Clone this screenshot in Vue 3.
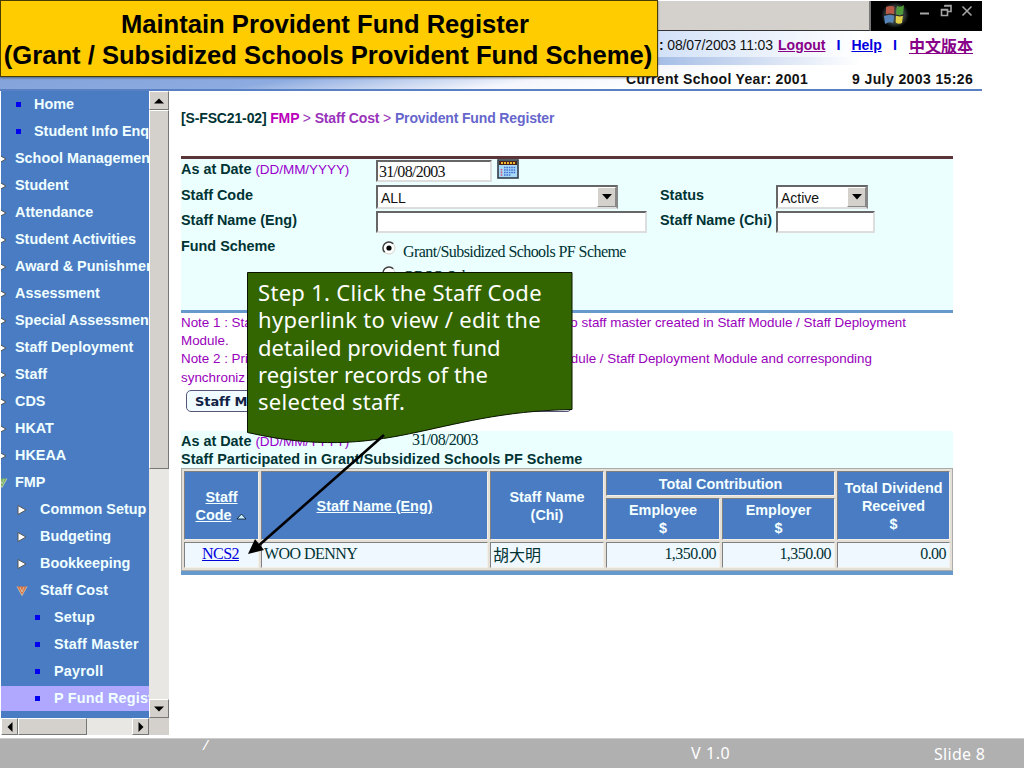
<script setup>
import { ref } from 'vue'

const menu = [
  { label: 'Home', level: 1, icon: 'dot' },
  { label: 'Student Info Enquiry', level: 1, icon: 'dot' },
  { label: 'School Management', level: 0, icon: 'closed' },
  { label: 'Student', level: 0, icon: 'closed' },
  { label: 'Attendance', level: 0, icon: 'closed' },
  { label: 'Student Activities', level: 0, icon: 'closed' },
  { label: 'Award & Punishment', level: 0, icon: 'closed' },
  { label: 'Assessment', level: 0, icon: 'closed' },
  { label: 'Special Assessment', level: 0, icon: 'closed' },
  { label: 'Staff Deployment', level: 0, icon: 'closed' },
  { label: 'Staff', level: 0, icon: 'closed' },
  { label: 'CDS', level: 0, icon: 'closed' },
  { label: 'HKAT', level: 0, icon: 'closed' },
  { label: 'HKEAA', level: 0, icon: 'closed' },
  { label: 'FMP', level: 0, icon: 'open' },
  { label: 'Common Setup', level: 2, icon: 'closed' },
  { label: 'Budgeting', level: 2, icon: 'closed' },
  { label: 'Bookkeeping', level: 2, icon: 'closed' },
  { label: 'Staff Cost', level: 2, icon: 'open' },
  { label: 'Setup', level: 3, icon: 'dot' },
  { label: 'Staff Master', level: 3, icon: 'dot' },
  { label: 'Payroll', level: 3, icon: 'dot' },
  { label: 'P Fund Register', level: 3, icon: 'dot' }
]

const current = ref('P Fund Register')

const rows = [
  { code: 'NCS2', eng: 'WOO DENNY', chi: '胡大明', employee: '1,350.00', employer: '1,350.00', dividend: '0.00' }
]
</script>

<template>
  <div class="slide">
    <header class="top">
      <div class="menubar">
        <div class="menubar-fill"></div>
        <div class="window-buttons">
          <svg class="flag" width="30" height="28" viewBox="0 0 30 28">
            <defs>
              <radialGradient id="glow"><stop offset=".4" stop-color="#5b6a6a" /><stop offset="1" stop-color="#000" /></radialGradient>
            </defs>
            <ellipse cx="15" cy="14" rx="14" ry="13" fill="url(#glow)" />
            <path d="M6 6q5-2 9 0l-1 8q-4-2-8 0z" fill="#b85a48" />
            <path d="M17 5q4 2 7-1l-1 9q-4 2-7 0z" fill="#4f9a38" />
            <path d="M4 15q5-2 10 0l-1 7q-4-2-8 1z" fill="#5784b8" />
            <path d="M16 14q3 2 7 0l-1 8q-4 2-7-1z" fill="#e0cf47" />
            <path d="M15 5v17M5 14q5-2 10 0t9 0" stroke="#222" fill="none" />
          </svg>
          <svg width="66" height="20" viewBox="0 0 66 20" fill="none" stroke="#a5a5a5" stroke-width="1.6">
            <path d="M10 12.500h9" stroke-width="2" />
            <path d="M34.500 4.500h6.500v6h-3M31.500 8.500h6v6h-6zM31 9h7M34 5h7" />
            <path d="M52.500 5.500l9 9M61.500 5.500l-9 9" />
          </svg>
        </div>
      </div>
      <div class="session">
        <span class="session-time"><b>:</b> 08/07/2003 11:03</span>
        <a class="visited logout">Logout</a>
        <b class="bar">I</b>
        <a class="help">Help</a>
        <b class="bar">I</b>
        <a class="visited chinese">中文版本</a>
      </div>
      <div class="year-line">
        <span class="year">Current School Year: 2001</span>
        <span class="today">9 July 2003 15:26</span>
      </div>
    </header>

    <div class="body">
      <aside class="sidebar">
        <div class="tree-row">
          <ul class="tree">
            <li v-for="item in menu" :key="item.label" :class="['level-' + item.level, { current: item.label === current }]"
                @click="current = item.label">
              <i v-if="item.icon === 'dot'" class="dot"></i>
              <svg v-else-if="item.icon === 'closed'" class="arrow" width="12" height="12" viewBox="0 0 12 12">
                <path d="M2 1.500l8 4.500-8 4.500z" fill="#fff" stroke="#555" stroke-width="1" />
              </svg>
              <svg v-else class="arrow" width="12" height="12" viewBox="0 0 12 12">
                <path d="M1 1.500h10L6 11z" :fill="item.level ? '#e07038' : '#76b45c'" />
                <path d="M1 1.500l5 9 5-9M4 2l2 5 2-5" fill="none" stroke="#c9cfc0" stroke-width=".8" />
              </svg>
              <span class="label">{{ item.label }}</span>
            </li>
          </ul>
          <div class="vscroll">
            <div class="sb-btn"><svg width="10" height="6"><path d="M0 5.500h10L5 .5z" /></svg></div>
            <div class="vthumb"></div>
            <div class="track"></div>
            <div class="sb-btn"><svg width="10" height="6"><path d="M0 .5h10L5 5.500z" /></svg></div>
          </div>
        </div>
        <div class="hscroll">
          <div class="hbtn"><svg width="6" height="10"><path d="M5.500 0v10L.5 5z" /></svg></div>
          <div class="hthumb"></div>
          <div class="track"></div>
          <div class="hbtn"><svg width="6" height="10"><path d="M.5 0v10l5-5z" /></svg></div>
          <div class="corner"></div>
        </div>
      </aside>

      <main class="content">
        <div class="crumbs">[S-FSC21-02] <span class="c1">FMP</span> <span class="c2"><i>&gt;</i> Staff Cost <i>&gt;</i></span> <span class="c3">Provident Fund Register</span></div>

        <section class="search">
          <div class="field-row">
            <label>As at Date <em>(DD/MM/YYYY)</em></label>
            <div class="box date">31/08/2003</div>
            <svg class="calendar" width="22" height="20" viewBox="0 0 22 20">
              <rect x="1" y="1" width="20" height="18" fill="#a8d8f8" stroke="#333c48" stroke-width="1.600" />
              <rect x="2" y="2" width="18" height="4" fill="#4b2518" />
              <path d="M4 4h14" stroke="#f0b830" stroke-width="2" stroke-dasharray="2 1" />
              <path d="M7 8.500h12M7 11h12M7 13.500h12M7 16h7" stroke="#3f6fd0" stroke-width="1.500" stroke-dasharray="1.600 .8" />
              <path d="M4.500 10v7" stroke="#d05070" stroke-width="1.500" stroke-dasharray="1.600 1" />
            </svg>
          </div>
          <div class="field-row">
            <label>Staff Code</label>
            <div class="box select code"><span>ALL</span><b><svg width="10" height="6"><path d="M0 0h10L5 5.500z" /></svg></b></div>
            <label class="second">Status</label>
            <div class="box select status"><span>Active</span><b><svg width="10" height="6"><path d="M0 0h10L5 5.500z" /></svg></b></div>
          </div>
          <div class="field-row">
            <label>Staff Name (Eng)</label>
            <div class="box eng"></div>
            <label class="second">Staff Name (Chi)</label>
            <div class="box chi"></div>
          </div>
          <div class="field-row">
            <label>Fund Scheme</label>
            <div>
              <div class="radio">
                <svg width="14" height="14" viewBox="0 0 14 14"><circle cx="7" cy="7" r="6" fill="#fff" stroke="#d5d1c8" /><path d="M2.700 11.300A6 6 0 0 1 11.300 2.700" fill="none" stroke="#444" stroke-width="1.500" /><circle cx="7" cy="7" r="2.600" /></svg>
                <span>Grant/Subsidized Schools PF Scheme</span>
              </div>
              <div class="radio">
                <svg width="14" height="14" viewBox="0 0 14 14"><circle cx="7" cy="7" r="6" fill="#fff" stroke="#d5d1c8" /><path d="M2.700 11.300A6 6 0 0 1 11.300 2.700" fill="none" stroke="#444" stroke-width="1.500" /></svg>
                <span>ORSO Scheme</span>
              </div>
            </div>
          </div>
        </section>

        <div class="notes">
          <div class="note n1"><span>Note 1 : Sta</span><span>o staff master created in Staff Module / Staff Deployment</span></div>
          <div class="note">Module.</div>
          <div class="note n2"><span>Note 2 : Prin</span><span>odule / Staff Deployment Module and corresponding</span></div>
          <div class="note">synchroniz</div>
        </div>
        <button class="master-btn">Staff M</button>

        <section class="result">
          <div class="result-date"><span class="date-label">As at Date <em>(DD/MM/YYYY)</em></span><span class="date-value">31/08/2003</span></div>
          <div class="result-title">Staff Participated in Grant/Subsidized Schools PF Scheme</div>
          <table>
            <colgroup>
              <col class="w1"><col class="w2"><col class="w3"><col class="w4"><col class="w5"><col class="w6">
            </colgroup>
            <thead>
              <tr class="head1">
                <th rowspan="2"><u>Staff</u><br><u>Code</u> <svg class="sort" width="11" height="7"><path d="M1 6h9L5.500 1z" fill="#c8f0ff" stroke="#123" stroke-width=".9" /></svg></th>
                <th rowspan="2"><u>Staff Name (Eng)</u></th>
                <th rowspan="2">Staff Name<br>(Chi)</th>
                <th colspan="2">Total Contribution</th>
                <th rowspan="2">Total Dividend<br>Received<br>$</th>
              </tr>
              <tr class="head2">
                <th>Employee<br>$</th>
                <th>Employer<br>$</th>
              </tr>
            </thead>
            <tbody>
              <tr v-for="row in rows" :key="row.code">
                <td class="code-cell"><a>{{ row.code }}</a></td>
                <td>{{ row.eng }}</td>
                <td class="chi-cell">{{ row.chi }}</td>
                <td class="num">{{ row.employee }}</td>
                <td class="num">{{ row.employer }}</td>
                <td class="num">{{ row.dividend }}</td>
              </tr>
            </tbody>
          </table>
        </section>
      </main>
    </div>

    <footer class="footer">
      <span class="slash">/</span>
      <span class="version">V 1.0</span>
      <span class="page">Slide 8</span>
    </footer>

    <!-- Title banner and callout lie over the application window -->
    <h1 class="banner"><span class="line1">Maintain Provident Fund Register</span><br><span>(Grant / Subsidized Schools Provident Fund Scheme)</span></h1>

    <div class="callout">
      <svg width="328" height="290" viewBox="0 0 328 290">
        <path d="M.5 .5H325V137.500C185 140 140 192 .5 160.500Z" fill="#336600" stroke="#0a1400" />
        <path d="M137 163L10 275" stroke="#000" stroke-width="2.600" />
        <path d="M1 282L8 267L17 278Z" />
      </svg>
      <p><span class="wide">Step 1. Click the Staff Code</span><br><span class="wide">hyperlink to view / edit the</span><br><span>detailed provident fund</span><br><span>register records of the</span><br><span class="wide">selected staff.</span></p>
    </div>
  </div>
</template>

<style>
body {
  background: #fff;
}
</style>

<style scoped>
.slide {
  position: relative;
  width: 1024px;
  height: 768px;
  overflow: hidden;
  background: #fff;
  display: flex;
  flex-direction: column;
  font: bold 14.4px "Liberation Sans", Arial, sans-serif;
  letter-spacing: 0;
  color: #003333;
  white-space: nowrap;
}

* {
  box-sizing: border-box;
}

em, i {
  font-style: normal;
}

/* window header */
.top {
  width: 982px;
  height: 91px;
  border-bottom: 2px solid #5a80c4;
  flex: none;
}

.menubar {
  display: flex;
  height: 31px;
  padding-top: 1px;
}

.menubar-fill {
  flex: 1;
  background: #d4d0cc;
  border-right: 2px solid #777;
  border-bottom: 1px solid #333;
}

.window-buttons {
  width: 111px;
  background: #000;
  display: flex;
  padding-left: 9px;
}

.session {
  display: flex;
  align-items: center;
  height: 34px;
  padding: 0 9px 6px 659px;
  background: linear-gradient(90deg, rgba(255, 255, 255, 0) 640px, #fff 860px) , linear-gradient(#cfdff8 0 26px, #9db8e4 26px);
  color: #111;
}

.session-time {
  width: 120px;
  font-weight: normal;
  font-size: 14px;
  letter-spacing: -0.15px;
}

.session a {
  text-decoration: underline;
  font-size: 14px;
  letter-spacing: 0;
}

.session .visited {
  color: #880088;
}

.session .help {
  color: #0000dd;
}

.logout {
  width: 48px;
}

.bar {
  width: 26px;
  text-align: center;
  color: #0000dd;
}

.help {
  width: 31px;
}

.session .chinese {
  margin-left: 1px;
  font: bold 16px/20px "Noto Sans CJK TC", sans-serif;
}

.year-line {
  display: flex;
  height: 24px;
  align-items: center;
  padding-top: 4px;
  padding-left: 626px;
  font-size: 14px;
  color: #111;
  letter-spacing: 0.32px;
  background: linear-gradient(172deg, #7fa0d8 0, #8dabe0 34%, #f4f6fc 56%, #fff 70%);
}

.year {
  width: 226px;
}

.today {
  letter-spacing: 0.4px;
}

/* tree menu */
.body {
  display: flex;
  height: 644px;
  flex: none;
}

.sidebar {
  width: 169px;
  padding-left: 1px;
}

.tree-row {
  display: flex;
  height: 627px;
}

.tree {
  width: 148px;
  margin: 0;
  padding: 0;
  list-style: none;
  background: #4a7cc4;
  color: #f0ffff;
  overflow: hidden;
}

.tree li {
  display: flex;
  align-items: center;
  height: 25px;
  margin: 1px 0 2px;
}

.tree li.current {
  background: #b0a8ff;
}

.label {
  padding-bottom: 1px;
}

.dot {
  width: 5px;
  height: 5px;
  background: #0000f0;
  flex: none;
}

.arrow {
  flex: none;
}

.level-0 .arrow {
  margin: 0 7px 0 -5px;
}

.level-1 .dot {
  margin: 0 13px 0 15px;
}

.level-2 .arrow {
  margin: 0 12px 0 15px;
}

.level-3 .dot {
  margin: 0 14px 0 34px;
}

.level-3 {
  letter-spacing: 0.2px;
}

.vscroll {
  width: 20px;
  display: flex;
  flex-direction: column;
}

.sb-btn, .hbtn, .vthumb, .hthumb {
  background: #d4d0cc;
  border: 1px solid #fff;
  border-right-color: #777;
  border-bottom-color: #777;
  display: flex;
  align-items: center;
  justify-content: center;
}

.sb-btn {
  height: 19px;
}

.vthumb {
  height: 359px;
}

.track {
  flex: 1;
  background: #e9e7e3;
}

.hscroll {
  display: flex;
  height: 17px;
}

.hbtn {
  width: 17px;
}

.hthumb {
  width: 69px;
}

.corner {
  width: 20px;
  background: #d4d0cc;
}

/* search form */
.content {
  width: 784px;
  padding: 17px 0 0 12px;
}

.crumbs {
  height: 48px;
  line-height: 20px;
  font-size: 14px;
  letter-spacing: -0.14px;
}

.crumbs i {
  font-weight: normal;
}

.c1 {
  color: #bb00bb;
}

.c2 {
  color: #9933bb;
}

.c3 {
  color: #6666cc;
}

.search {
  height: 157px;
  background: #ecffff;
  border-top: 3px solid #5a3436;
  border-bottom: 3px solid #6699cc;
}

.field-row {
  display: flex;
  height: 25.7px;
}

.field-row label {
  width: 195px;
  line-height: 20px;
}

.field-row label.second {
  width: 116px;
}

em {
  color: #9900cc;
  font-weight: normal;
  font-size: 13.5px;
  letter-spacing: -0.05px;
}

.box {
  background: #fff;
  border: 2px solid;
  border-color: #666 #ddd #ddd #666;
  height: 22px;
  margin-top: 1px;
  color: #111;
  font-weight: normal;
}

.date {
  width: 116px;
  font: 16px/20px "Liberation Serif", serif;
  letter-spacing: -0.7px;
  padding-left: 1px;
}

.calendar {
  margin-left: 5px;
}

.select {
  display: flex;
  justify-content: space-between;
  height: 24px;
  margin-top: 0;
  border-right-color: #888;
  line-height: 22px;
  padding-left: 3px;
  font-size: 14px;
}

.select b {
  width: 19px;
  background: #d4d0cc;
  border: 1px solid;
  border-color: #fff #888 #888 #fff;
  display: flex;
  align-items: center;
  justify-content: center;
}

.code {
  width: 242px;
  margin-right: 42px;
}

.status {
  width: 92px;
}

.eng {
  width: 271px;
  margin-right: 13px;
}

.chi {
  width: 99px;
}

.radio {
  display: flex;
  height: 25px;
  padding: 5px 0 0 6px;
}

.radio span {
  margin: 1px 0 0 7px;
  font: 16px/20px "Liberation Serif", serif;
  letter-spacing: -0.57px;
}

/* notes */
.notes {
  height: 73px;
  padding-top: 1px;
  color: #9900bb;
  font-weight: normal;
  font-size: 13.4px;
}

.note {
  display: flex;
  justify-content: space-between;
  line-height: 18.2px;
}

.n1 {
  width: 725px;
}

.n2 {
  width: 691px;
}

.master-btn {
  display: block;
  width: 386px;
  height: 22px;
  margin: 4px 0 0 5px;
  padding: 0 8px;
  text-align: left;
  font: bold 13px "DejaVu Sans", sans-serif;
  letter-spacing: -0.1px;
  color: #112244;
  background: #f0fcff;
  border: 1.5px solid #557;
  border-radius: 5px;
}

/* result table */
.result {
  width: 772px;
  margin-top: 19px;
  background: #ecffff;
  border-bottom: 4px solid #6699cc;
}

.result-date {
  display: flex;
  height: 19px;
  line-height: 20px;
}

.date-label {
  width: 231px;
}

.date-value {
  font: 16px/17px "Liberation Serif", serif;
  letter-spacing: -0.7px;
}

.result-title {
  height: 18px;
  line-height: 18px;
  letter-spacing: 0.04px;
}

table {
  width: 772px;
  height: 103px;
  table-layout: fixed;
  border-spacing: 2px;
  border: 1px solid #aaa;
  background: #e4e0d8;
}

.w1 { width: 75px; }
.w2 { width: 227px; }
.w3 { width: 114px; }
.w4 { width: 114px; }
.w5 { width: 113px; }
.w6 { width: 113px; }

th, td {
  padding: 0;
  border: 1px solid;
  border-color: #808080 #f4f0e8 #f4f0e8 #808080;
}

th {
  background: #4a7cc4;
  color: #f4ffff;
  line-height: 18px;
}

.head1 {
  height: 25px;
}

.head2 {
  height: 42px;
}

.sort {
  margin-left: 1px;
}

td {
  height: 26px;
  background: #f0f8ff;
  font: 16px/22px "Liberation Serif", "Noto Sans CJK TC", serif;
  letter-spacing: -0.55px;
  padding: 0 4px 0 2px;
  vertical-align: top;
}

.code-cell {
  text-align: center;
}

.code-cell a {
  color: #0000dd;
  text-decoration: underline;
}

.chi-cell {
  font-family: "Noto Sans CJK TC", sans-serif;
  letter-spacing: 0;
}

.num {
  text-align: right;
  padding-right: 3px;
}

/* slide footer */
.footer {
  display: flex;
  height: 30px;
  margin-top: 3px;
  border-top: 1px solid #ccc;
  background: #b0b0b0;
  color: #fff;
  font: 16px/29px "Noto Sans", sans-serif;
}

.slash {
  width: 488px;
  margin-left: 203px;
  line-height: 12px;
  font-style: italic;
  font-size: 14px;
}

.version {
  width: 243px;
  letter-spacing: 0.6px;
}

.page {
  line-height: 31px;
  letter-spacing: 0.3px;
}

/* overlays */
.banner {
  position: absolute;
  left: 0;
  top: 0;
  width: 658px;
  height: 77px;
  margin: 0;
  padding-top: 8px;
  padding-right: 2px;
  text-align: center;
  font: bold 25.6px/31px "Liberation Sans", Arial, sans-serif;
  color: #000;
  background: #ffcc00;
  border: 1px solid #4a3c00;
  box-shadow: 0 1px 2px rgba(0, 0, 0, 0.4);
}

.line1 {
  margin-right: 6px;
}

.callout {
  position: absolute;
  left: 247px;
  top: 272px;
}

.callout p {
  position: absolute;
  left: 11px;
  top: 7px;
  margin: 0;
  font: 22px/27.3px "Noto Sans", sans-serif;
  color: #fff;
}

.callout .wide {
  letter-spacing: 0.31px;
}
</style>
